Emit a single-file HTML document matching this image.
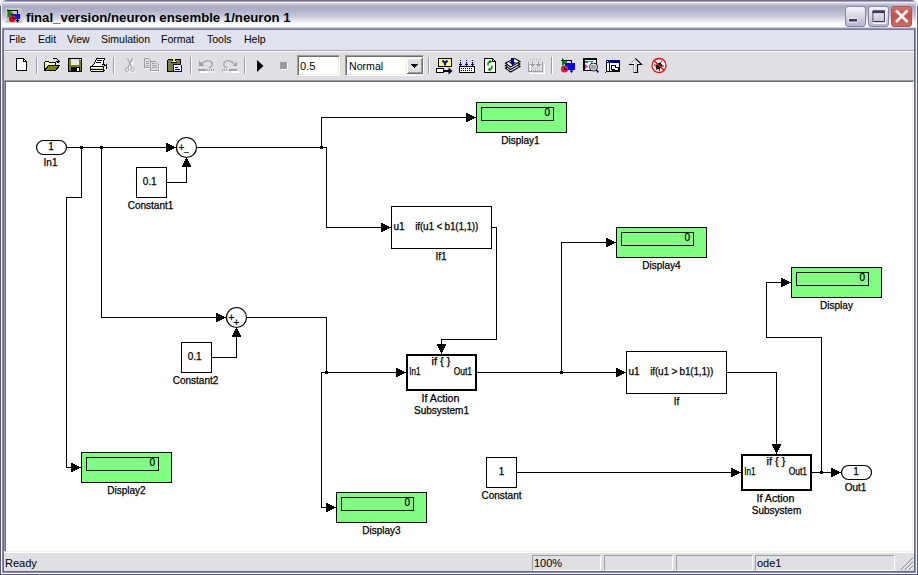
<!DOCTYPE html>
<html><head><meta charset="utf-8"><title>final_version/neuron ensemble 1/neuron 1</title>
<style>
html,body{margin:0;padding:0;}
body{width:918px;height:575px;overflow:hidden;background:#f4f4f6;font-family:"Liberation Sans",sans-serif;position:relative;}
.abs{position:absolute;}
#frame{left:0;top:0;width:918px;height:575px;border-radius:8px 8px 0 0;background:#6d6d8d;overflow:hidden;}
#title{left:0;top:0;width:918px;height:30px;border-radius:8px 8px 0 0;
 background:linear-gradient(to bottom,#70708e 0px,#70708e 1px,#a2a2bd 1px,#a2a2bd 2px,#f2f2f8 2px,#f2f2f8 3px,#cfcfe0 3px,#cfcfe0 4px,#b6b6cf 5px,#a9a9c5 7px,#b3b4ca 11px,#c6c8d8 16px,#e2e3eb 20px,#f7f7fa 23px,#fefefe 25px,#fdfdfe 27px,#d2d2de 27px,#d2d2de 28px,#9797b0 28px,#9797b0 29px,#7c7c9b 29px,#7c7c9b 30px);}
#titletext{left:26px;top:10px;font-weight:bold;font-size:13.2px;line-height:16px;color:#000;white-space:nowrap;letter-spacing:0px;}
#lb0{left:0;top:6px;width:1px;height:569px;background:#58587a;}
#lb1{left:1px;top:4px;width:1px;height:570px;background:#fbfbfe;}
#lb2{left:2px;top:28px;width:1px;height:545px;background:#8c8cab;}
#lb3{left:3px;top:29px;width:1px;height:543px;background:#6b6b89;}
#rb0{left:917px;top:6px;width:1px;height:569px;background:#58587a;}
#rb1{left:916px;top:4px;width:1px;height:570px;background:#fbfbfe;}
#rb2{left:914px;top:29px;width:1px;height:543px;background:#66668a;}
#rb3{left:915px;top:28px;width:1px;height:545px;background:#9090ae;}
#bb0{left:0;top:574px;width:918px;height:1px;background:#58587a;}
#bb1{left:1px;top:573px;width:916px;height:1px;background:#fbfbfe;}
#bb2{left:3px;top:571px;width:912px;height:1px;background:#66668a;}
#bb3{left:2px;top:572px;width:914px;height:1px;background:#9090ae;}
#menubar{left:4px;top:30px;width:910px;height:20px;background:#e0e3ee;}
.mi{position:absolute;top:33px;font-size:10.5px;line-height:13px;color:#000;white-space:nowrap;}
#sep1{left:4px;top:50px;width:910px;height:1px;background:#a7a6aa;}
#sep2{left:4px;top:51px;width:910px;height:1px;background:#ffffff;}
#toolbar{left:4px;top:52px;width:910px;height:28px;background:#e0dfe3;}
.tsep{position:absolute;top:57px;width:1px;height:17px;background:#9d9da1;border-right:1px solid #fff;}
#cvborder{left:4px;top:80px;width:910px;height:472px;background:#e0dfe3;}
#cvtop{left:4px;top:80px;width:910px;height:1px;background:#9d9da1;}
#cvtop2{left:5px;top:81px;width:908px;height:1px;background:#716f64;}
#cvleft{left:4px;top:80px;width:1px;height:471px;background:#9d9da1;}
#cvleft2{left:5px;top:81px;width:1px;height:470px;background:#716f64;}
#cvright{left:912px;top:82px;width:1px;height:470px;background:#f1efe2;}
#cvright2{left:913px;top:81px;width:1px;height:472px;background:#fff;}
#cvbot2{left:4px;top:552px;width:910px;height:1px;background:#fff;}
#cvbot{left:5px;top:551px;width:908px;height:1px;background:#f1efe2;}
#canvas{left:6px;top:82px;width:906px;height:469px;background:#fff;}
#status{left:4px;top:553px;width:910px;height:18px;background:#e0dfe3;}
.pane{position:absolute;top:555px;border-top:1px solid #9d9da1;border-left:1px solid #9d9da1;border-right:1px solid #fff;border-bottom:1px solid #fff;font-size:11px;line-height:14px;color:#000;padding-left:1px;box-sizing:border-box;height:16px;}
.st{position:absolute;font-size:11px;line-height:13px;color:#000;white-space:nowrap;}
.cbtn{position:absolute;top:6px;width:19px;height:19px;border:1px solid #8686a6;border-radius:3px;background:linear-gradient(to bottom,#f4f4fa 0%,#dcdce8 40%,#b4b4cc 100%);}
#cclose{background:linear-gradient(to bottom,#d8706a 0%,#c4504c 45%,#d06a60 100%);border-color:#9a5a64;}
svg{position:absolute;overflow:visible;}
svg text{font-family:"Liberation Sans",sans-serif;fill:#000;stroke:#000;stroke-width:0.25px;}
.inp{position:absolute;top:55px;height:17px;background:#fff;border:1px solid;border-color:#9d9da1 #fff #fff #9d9da1;padding:1px;box-shadow:inset 1px 1px 0 #716f64, inset -1px -1px 0 #f1efe2;font-size:11px;line-height:19px;color:#000;}
</style></head>
<body>
<div id="frame" class="abs"></div>
<div id="title" class="abs"></div>
<div id="lb0" class="abs"></div><div id="lb1" class="abs"></div><div id="lb2" class="abs"></div><div id="lb3" class="abs"></div>
<div id="rb2" class="abs"></div><div id="rb3" class="abs"></div><div id="rb1" class="abs"></div><div id="rb0" class="abs"></div>
<div id="bb2" class="abs"></div><div id="bb3" class="abs"></div><div id="bb1" class="abs"></div><div id="bb0" class="abs"></div>
<!-- title icon -->
<svg class="abs" style="left:6px;top:8px" width="16" height="15" viewBox="0 0 16 15" shape-rendering="crispEdges">
<rect x="0" y="0" width="16" height="15" fill="#c6c6c6"/>
<polygon points="1.500,1 1.500,10 7.500,5.500" fill="#008a10" shape-rendering="auto"/>
<rect x="5" y="6" width="9" height="5" fill="#0000f0"/>
<circle cx="6.300" cy="10.700" r="3.400" fill="#f00000" shape-rendering="auto"/>
<path d="M1 2.500 H11.500 V13" fill="none" stroke="#000"/>
<path d="M6.500 8.500 V10.500 H9" fill="none" stroke="#000"/>
<polygon points="9.500,12 13.500,12 11.500,14.500" fill="#000" shape-rendering="auto"/>
<rect x="15" y="0" width="1" height="1" fill="#00ffff"/><rect x="0" y="14" width="1" height="1" fill="#00ffff"/>
</svg>
<div id="titletext" class="abs">final_version/neuron ensemble 1/neuron 1</div>
<!-- caption buttons -->
<div class="cbtn" style="left:845px"></div>
<div class="cbtn" style="left:868px"></div>
<div class="cbtn" id="cclose" style="left:891px"></div>
<svg class="abs" style="left:845px;top:6px" width="67" height="21" viewBox="845 6 67 21">
<rect x="848.5" y="18.5" width="9" height="4" fill="#fff"/>
<rect x="849" y="19" width="8" height="2.6" fill="#3a3a5a"/>
<rect x="873" y="11" width="12" height="11.5" fill="none" stroke="#fff" stroke-width="1.2" transform="translate(0.6,0.8)"/>
<path d="M873 11 H884.5 V21.5 H873 Z" fill="none" stroke="#3a3a5a" stroke-width="1"/>
<rect x="872.5" y="10.5" width="12.5" height="2.6" fill="#3a3a5a"/>
<path d="M896 10.5 L907.5 22 M907.5 10.5 L896 22" stroke="#fff" stroke-width="2.6" stroke-linecap="butt" fill="none"/>
</svg>
<!-- menubar -->
<div id="menubar" class="abs"></div>
<div class="mi" style="left:9px">File</div>
<div class="mi" style="left:38px">Edit</div>
<div class="mi" style="left:67px">View</div>
<div class="mi" style="left:101px">Simulation</div>
<div class="mi" style="left:161px">Format</div>
<div class="mi" style="left:207px">Tools</div>
<div class="mi" style="left:244px">Help</div>
<div id="sep1" class="abs"></div><div id="sep2" class="abs"></div>
<div id="toolbar" class="abs"></div>
<div class="tsep" style="left:36px"></div>
<div class="tsep" style="left:113px"></div>
<div class="tsep" style="left:190px"></div>
<div class="tsep" style="left:244px"></div>
<div class="tsep" style="left:428px"></div>
<div class="tsep" style="left:551px"></div>
<svg class="abs" style="left:0;top:52px" width="700" height="28" viewBox="0 52 700 28" shape-rendering="crispEdges">
<!-- new -->
<path d="M16.5 58.5 H23.5 L26.5 61.5 V70.5 H16.5 Z" fill="#fff" stroke="#000"/>
<path d="M23.5 58.5 V61.5 H26.5" fill="none" stroke="#000"/>
<!-- open -->
<path d="M44.5 70.5 V62.5 L45.5 61.5 H48.5 L49.5 62.5 H55.5 V66" fill="#ffffa0" stroke="#000"/>
<path d="M44.5 70.5 L48.5 65.500 H59.500 L55.500 70.500 Z" fill="#808000" stroke="#000"/>
<path d="M52.500 59.500 L53.500 58.500 H56.500 L58.500 60.500 V62" fill="none" stroke="#000"/>
<path d="M56 61.500 H60 M57 62.500 H59" stroke="#000" fill="none"/>
<!-- save -->
<rect x="68.5" y="58.5" width="13" height="13" fill="#808000" stroke="#000"/>
<rect x="71" y="59" width="8" height="6" fill="#e8e8e8"/>
<rect x="71" y="67" width="9" height="4" fill="#000"/>
<rect x="77" y="68" width="2" height="3" fill="#fff"/>
<rect x="80" y="59" width="1" height="1" fill="#fff"/>
<!-- print -->
<path d="M93.500 65.500 L96.500 58.500 H104.500 L102.500 65.500" fill="#fff" stroke="#000"/>
<path d="M97 60.500 H102 M96 62.500 H101" stroke="#000" fill="none"/>
<path d="M90.500 67.500 L93.500 64.500 M102 64.500 H104.500 L106.500 66.500" stroke="#000" fill="none"/>
<path d="M90.500 66.500 H103.500 V71.500 H91.500 L90.500 70.500 Z" fill="#fff" stroke="#000"/>
<path d="M103.500 66.500 L106.500 64.500 V68.500 L103.500 71.500" fill="#e8e8e8" stroke="#000"/>
<path d="M91 69.500 H103" stroke="#000"/>
<path d="M91 68.500 H103" stroke="#c8c8c8"/>
<rect x="97" y="68" width="4" height="1" fill="#ffff00"/>
<path d="M104 67.500 H105 M105 69.500 H106" stroke="#fff"/>
<!-- cut (disabled) -->
<g shape-rendering="auto" fill="none">
<path d="M128 59.500 L133 68 M133 59.500 L128 68" stroke="#fff" stroke-width="1.200" transform="translate(1,1)"/>
<circle cx="127.500" cy="69.500" r="1.800" stroke="#fff" transform="translate(1,1)"/><circle cx="132.500" cy="69.500" r="1.800" stroke="#fff" transform="translate(1,1)"/>
<path d="M127.500 58.500 L132 67.500 M132.500 58.500 L128 67.500" stroke="#a0a0a4" stroke-width="1.200"/>
<circle cx="127" cy="69.500" r="1.800" stroke="#a0a0a4"/><circle cx="132.500" cy="69.500" r="1.800" stroke="#a0a0a4"/>
</g>
<!-- copy (disabled) -->
<path d="M145.500 59.500 H149.500 L151.500 61.500 V68.500 H145.500 Z" fill="none" stroke="#fff"/>
<path d="M151.500 62.500 H156.500 L159.500 65.500 V71.500 H151.500 Z" fill="none" stroke="#fff"/>
<path d="M144.500 58.500 H148.500 L150.500 60.500 V67.500 H144.500 Z" fill="#e0dfe3" stroke="#a0a0a4"/>
<path d="M150.500 61.500 H155.500 L158.500 64.500 V70.500 H150.500 Z" fill="#e0dfe3" stroke="#a0a0a4"/>
<path d="M146 61.500 H149 M146 63.500 H149 M146 65.500 H149 M152 65.500 H157 M152 67.500 H157 M152 63.500 H155" stroke="#a0a0a4" fill="none"/>
<!-- paste -->
<rect x="167.500" y="59.500" width="13" height="12" rx="1.500" fill="#7c7c44" stroke="#000"/>
<path d="M171 62.500 H177" stroke="#000"/>
<path d="M172 61.500 H176 M173 60.500 H175" stroke="#e8e8a0"/>
<rect x="173" y="58" width="2" height="2" fill="#ffff00"/>
<path d="M172 60.500 H173 M175 60.500 H176" stroke="#000"/>
<rect x="173.500" y="64.500" width="8" height="7" fill="#fff" stroke="#000080"/>
<path d="M175 67.500 H178 M175 69.500 H180" stroke="#000080"/>
<rect x="181" y="64" width="1" height="1" fill="#fff"/>
<!-- undo (disabled) -->
<g fill="none">
<path d="M199 70.500 H207 M208 70.500 H209 M210 70.500 H211 M212 70.500 H213" stroke="#fff" stroke-width="2" transform="translate(1,1)"/>
<path d="M198 69.500 H206" stroke="#a0a0a4" stroke-width="2"/>
<path d="M207 69.500 H208 M209 69.500 H210 M211 69.500 H212 M213 69.500 H214" stroke="#a0a0a4" stroke-width="2"/>
<path d="M202 63.500 Q207 58.500 211.500 62 Q214 65.500 209 68" stroke="#a0a0a4" stroke-width="1.300" shape-rendering="auto"/>
<polygon points="199,61 199,66 204,66" fill="#a0a0a4"/>
</g>
<!-- redo (disabled) -->
<g fill="none">
<path d="M230 70.500 H238 M223 70.500 H224 M225 70.500 H226 M227 70.500 H228" stroke="#fff" stroke-width="2" transform="translate(1,1)"/>
<path d="M229 69.500 H237" stroke="#a0a0a4" stroke-width="2"/>
<path d="M222 69.500 H223 M224 69.500 H225 M226 69.500 H227" stroke="#a0a0a4" stroke-width="2"/>
<path d="M234 63.500 Q229 58.500 224.500 62 Q222 65.500 227 68" stroke="#a0a0a4" stroke-width="1.300" shape-rendering="auto"/>
<polygon points="237,61 237,66 232,66" fill="#a0a0a4"/>
</g>
<!-- play / stop -->
<polygon points="257,60 257,72 263.500,66" fill="#000" shape-rendering="auto"/>
<rect x="281" y="63" width="7" height="7" fill="#fff"/>
<rect x="280" y="62" width="7" height="7" fill="#9a9a9e"/>
<!-- Y block -->
<rect x="438.500" y="58.500" width="13" height="8" fill="#ffff70" stroke="#000"/>
<path d="M442.500 60.500 L445 63 L447.500 60.500 M445 63 V65.500" stroke="#0000c0" stroke-width="2" fill="none" shape-rendering="auto"/>
<rect x="436.500" y="68.500" width="7" height="4" fill="#fff" stroke="#000"/>
<path d="M444 70.500 H450" stroke="#000"/><path d="M444 71.500 H450" stroke="#000"/>
<polygon points="448.500,67.500 452.500,71 448.500,74.500" fill="#000" shape-rendering="auto"/>
<!-- keyboard -->
<rect x="459.500" y="66.500" width="15" height="6" fill="#fff" stroke="#000"/>
<path d="M461 68.500 H462 M463 68.500 H464 M465 68.500 H466 M467 68.500 H468 M469 68.500 H470 M471 68.500 H472 M461 70.500 H462 M463 70.500 H464 M465 70.500 H466 M467 70.500 H468 M469 70.500 H470 M471 70.500 H472" stroke="#000"/>
<g fill="#000090" stroke="none">
<rect x="460" y="60" width="1" height="1"/><rect x="460" y="62" width="1" height="3"/><polygon points="458.500,63.500 462.500,63.500 460.500,66.500"/>
<rect x="466" y="60" width="1" height="1"/><rect x="466" y="62" width="1" height="3"/><polygon points="464.500,63.500 468.500,63.500 466.500,66.500"/>
<rect x="472" y="60" width="1" height="1"/><rect x="472" y="62" width="1" height="3"/><polygon points="470.500,63.500 474.500,63.500 472.500,66.500"/>
</g>
<!-- doc refresh -->
<path d="M484.500 58.500 H492.500 L495.500 61.500 V72.500 H484.500 Z" fill="#fff" stroke="#000"/>
<path d="M492.500 58.500 V61.500 H495.500" fill="none" stroke="#000"/>
<g shape-rendering="auto" fill="none" stroke="#009000" stroke-width="1.400">
<path d="M488 65.500 Q487.500 62 490 61.500"/><polygon points="489.500,59.500 492.500,61.500 489.500,63.500" fill="#009000" stroke="none"/>
<path d="M492 65.500 Q492.500 69 490 69.500"/><polygon points="490.500,67.500 487.500,69.500 490.500,71.500" fill="#009000" stroke="none"/>
</g>
<!-- stack -->
<g shape-rendering="auto" stroke="#000" stroke-width="1.100" fill="#fff">
<polygon points="505.500,68 515,63.500 520,66.500 510.500,72"/>
<polygon points="505.500,65.500 515,61 520,64 510.500,69.500"/>
<polygon points="505.500,63 515,58.500 520,61.500 510.500,67"/>
</g>
<rect x="511" y="58" width="3" height="4" fill="#000090"/>
<polygon points="509,62 516,62 512.500,65.500" fill="#000090" shape-rendering="auto"/>
<!-- disabled box -->
<path d="M529.500 63 V72.500 H543.500 V63" fill="none" stroke="#fff" transform="translate(1,1)"/>
<path d="M528.500 62 V71.500 H542.500 V62" fill="none" stroke="#a0a0a4"/>
<g fill="#a0a0a4"><rect x="532" y="61" width="1" height="3"/><polygon points="530,64 535,64 532.500,67"/><rect x="538" y="61" width="1" height="3"/><polygon points="536,64 541,64 538.500,67"/></g>
<path d="M530 59.500 H531 M532 59.500 H533 M534 59.500 H535 M536 59.500 H537 M538 59.500 H539 M540 59.500 H541 M531 68.500 H532 M533 68.500 H534 M535 68.500 H536 M537 68.500 H538 M539 68.500 H540 M531 70.500 H532 M533 70.500 H534 M535 70.500 H536 M537 70.500 H538 M539 70.500 H540" stroke="#b4b4b8"/>
<!-- library browser -->
<polygon points="562,58 562,66 567.500,62" fill="#008000" shape-rendering="auto"/>
<rect x="565" y="63" width="10" height="7" fill="#0000ff"/>
<circle cx="564.500" cy="69" r="3.600" fill="#f01050" shape-rendering="auto"/>
<path d="M561 60.500 H571.500 V71" fill="none" stroke="#000"/>
<polygon points="569.500,70.500 573.500,70.500 571.500,73" fill="#000" shape-rendering="auto"/>
<path d="M564.500 67 V69.500 H566.500" fill="none" stroke="#000"/>
<!-- model explorer -->
<rect x="583.500" y="58.500" width="13" height="12" fill="#fff" stroke="#000"/>
<path d="M583 59.500 H597 M584.500 59 V71" stroke="#000"/>
<rect x="585" y="61" width="3" height="2" fill="#008080"/>
<path d="M588 61.500 H593 M591.500 62 V65" stroke="#00a0a0"/>
<polygon points="585,64 585,69 588,66.500" fill="#ff00ff" shape-rendering="auto"/>
<circle cx="593.500" cy="67" r="4" fill="#fff" stroke="#000" stroke-width="0.900" shape-rendering="auto"/><circle cx="593.500" cy="67" r="2.600" fill="#a0a0a4" shape-rendering="auto"/>
<path d="M596.300 70 L598.300 72.300" stroke="#000090" stroke-width="1.800" shape-rendering="auto"/>
<!-- window -->
<rect x="606.500" y="60.500" width="13" height="11" fill="#fff" stroke="#000"/>
<rect x="606" y="60" width="14" height="3" fill="#000080"/>
<rect x="607" y="61" width="1" height="1" fill="#fff"/>
<path d="M609.500 63 V71 M612 65.500 H615 M612 69.500 H615 M611.500 65 V70 M615.500 65 V67.500 H618 V70.500 H612" stroke="#000" fill="none"/>
<rect x="605" y="72" width="1" height="1" fill="#000080"/>
<!-- up arrow -->
<path d="M635.500 58.500 L629.500 64.500 H633.500 V72.500 H637.500 V64.500 H641.500 Z" fill="#f6f6f6" stroke="none" shape-rendering="auto"/>
<path d="M636.500 60 V72 M635.500 61 V72" fill="none" stroke="#d4d4d8" shape-rendering="crispEdges"/>
<path d="M635.500 58.500 L629.500 64.500 M633.500 65 V72" fill="none" stroke="#9a9a9e" stroke-width="0.900" shape-rendering="auto"/>
<path d="M635.500 58.500 L641.500 64.500 H637.500 V72.500 H633.500 M629 64.500 H634" fill="none" stroke="#000" stroke-width="1.100" shape-rendering="auto"/>
<!-- no bug -->
<g shape-rendering="auto">
<circle cx="659" cy="65.500" r="7" fill="#fff" stroke="#ff0000" stroke-width="1.300"/>
<ellipse cx="659" cy="66" rx="3.600" ry="2.600" fill="#000" transform="rotate(-40 659 66)"/>
<path d="M654 65 L664 66 M656 70 L662 61 M659 66 L659.500 71" stroke="#000" stroke-width="0.900"/>
<circle cx="662.500" cy="63" r="1.500" fill="#e8e8e8"/>
<path d="M654 60.500 L664 70.500" stroke="#ff0000" stroke-width="1.400"/>
</g>
</svg>

<div class="inp" style="left:297px;width:39px;"><span style="padding-left:1px">0.5</span></div>
<div class="inp" style="left:345px;width:75px;"><span style="padding-left:2px;font-size:10.6px">Normal</span>
<div style="position:absolute;right:0px;top:1px;width:17px;height:17px;background:#e0dfe3;box-shadow:inset 1px 1px 0 #f1efe2, inset -1px -1px 0 #716f64, inset 2px 2px 0 #fff, inset -2px -2px 0 #9d9da1;"></div>
<svg style="left:65px;top:8px" width="7" height="4" viewBox="0 0 7 4" shape-rendering="crispEdges"><polygon points="0,0 7,0 3.5,4" fill="#000"/></svg>
</div>
<!-- canvas -->
<div id="cvborder" class="abs"></div><div id="cvtop" class="abs"></div><div id="cvleft" class="abs"></div><div id="cvtop2" class="abs"></div><div id="cvleft2" class="abs"></div>
<div id="cvright" class="abs"></div><div id="cvright2" class="abs"></div><div id="cvbot" class="abs"></div>
<div id="canvas" class="abs"></div>
<svg class="abs" style="left:0;top:0" width="918" height="575" viewBox="0 0 918 575" shape-rendering="crispEdges">
<rect x="36.5" y="140.5" width="30" height="14" rx="7" ry="7" fill="#fff" stroke="#000" stroke-width="1.2" shape-rendering="auto"/>
<text x="51" y="150.0" text-anchor="middle" font-size="10" >1</text>
<text x="50.5" y="166.0" text-anchor="middle" font-size="10" >In1</text>
<path d="M67.5 147.5 L175.5 147.5" fill="none" stroke="#000" stroke-width="1" stroke-linecap="square"/>
<polygon points="176,147.5 166,142.5 166,152.5" fill="#000"/>
<rect x="80" y="146" width="3" height="3" fill="#000"/>
<rect x="100" y="146" width="3" height="3" fill="#000"/>
<path d="M81.5 147.5 L81.5 197.5 L66.5 197.5 L66.5 467.5 L80.5 467.5" fill="none" stroke="#000" stroke-width="1" stroke-linecap="square"/>
<polygon points="81,467.5 71,462.5 71,472.5" fill="#000"/>
<path d="M101.5 147.5 L101.5 317.5 L225.5 317.5" fill="none" stroke="#000" stroke-width="1" stroke-linecap="square"/>
<polygon points="226,317.5 216,312.5 216,322.5" fill="#000"/>
<circle cx="186.5" cy="147.5" r="10" fill="#fff" stroke="#000" stroke-width="1.2" shape-rendering="auto"/>
<text x="181.5" y="151.0" text-anchor="middle" font-size="10" >+</text>
<text x="186.5" y="150.7" text-anchor="middle" font-size="8" >_</text>
<rect x="136.5" y="167.5" width="30" height="30" fill="#fff" stroke="#000" stroke-width="1"/>
<text x="149.6" y="185.0" text-anchor="middle" font-size="10" >0.1</text>
<text x="150.5" y="209.0" text-anchor="middle" font-size="10" >Constant1</text>
<path d="M167.5 182.5 L186.5 182.5 L186.5 158.5" fill="none" stroke="#000" stroke-width="1" stroke-linecap="square"/>
<polygon points="186.5,157 181.5,167 191.5,167" fill="#000"/>
<path d="M196.5 147.5 L326.5 147.5 L326.5 227.5 L390.5 227.5" fill="none" stroke="#000" stroke-width="1" stroke-linecap="square"/>
<polygon points="391,227.5 381,222.5 381,232.5" fill="#000"/>
<rect x="320" y="146" width="3" height="3" fill="#000"/>
<path d="M321.5 147.5 L321.5 117.5 L475.5 117.5" fill="none" stroke="#000" stroke-width="1" stroke-linecap="square"/>
<polygon points="476,117.5 466,112.5 466,122.5" fill="#000"/>
<rect x="476.5" y="102.5" width="90" height="30" fill="#80ff80" stroke="#000" stroke-width="1"/>
<rect x="481.5" y="107.5" width="72" height="13" fill="#80ff80" stroke="#000" stroke-width="1"/>
<text x="550" y="116.0" text-anchor="end" font-size="10" >0</text>
<text x="520.5" y="144.0" text-anchor="middle" font-size="10" >Display1</text>
<rect x="391.5" y="206.5" width="100" height="42" fill="#fff" stroke="#000" stroke-width="1"/>
<text x="393.5" y="230.0" text-anchor="start" font-size="10" >u1</text>
<text x="415.3" y="230.0" text-anchor="start" font-size="10" textLength="63">if(u1 &lt; b1(1,1))</text>
<text x="441" y="260.0" text-anchor="middle" font-size="10" >If1</text>
<path d="M492.5 227.5 L496.5 227.5 L496.5 339.5 L441.5 339.5 L441.5 353.5" fill="none" stroke="#000" stroke-width="1" stroke-linecap="square"/>
<polygon points="441.5,354 436.5,344 446.5,344" fill="#000"/>
<rect x="407.0" y="355.0" width="69" height="35" fill="#fff" stroke="#000" stroke-width="2"/>
<text x="441" y="365.0" text-anchor="middle" font-size="10" textLength="19" lengthAdjust="spacingAndGlyphs">if { }</text>
<text x="409.3" y="375.0" text-anchor="start" font-size="10" textLength="11.3" lengthAdjust="spacingAndGlyphs">In1</text>
<text x="472" y="375.0" text-anchor="end" font-size="10" textLength="18.3" lengthAdjust="spacingAndGlyphs">Out1</text>
<text x="440.5" y="402.0" text-anchor="middle" font-size="10" textLength="38" lengthAdjust="spacingAndGlyphs">If Action</text>
<text x="441.5" y="414.0" text-anchor="middle" font-size="10" >Subsystem1</text>
<circle cx="236.5" cy="317.5" r="10" fill="#fff" stroke="#000" stroke-width="1.2" shape-rendering="auto"/>
<text x="231.5" y="321.0" text-anchor="middle" font-size="10" >+</text>
<text x="236.5" y="326.0" text-anchor="middle" font-size="10" >+</text>
<rect x="181.5" y="342.5" width="30" height="30" fill="#fff" stroke="#000" stroke-width="1"/>
<text x="194.6" y="360.0" text-anchor="middle" font-size="10" >0.1</text>
<text x="195.5" y="384.0" text-anchor="middle" font-size="10" >Constant2</text>
<path d="M212.5 357.5 L236.5 357.5 L236.5 328.5" fill="none" stroke="#000" stroke-width="1" stroke-linecap="square"/>
<polygon points="236.5,327 231.5,337 241.5,337" fill="#000"/>
<path d="M246.5 317.5 L326.5 317.5 L326.5 372.5" fill="none" stroke="#000" stroke-width="1" stroke-linecap="square"/>
<path d="M321.5 372.5 L405.5 372.5" fill="none" stroke="#000" stroke-width="1" stroke-linecap="square"/>
<polygon points="406,372.5 396,367.5 396,377.5" fill="#000"/>
<rect x="325" y="371" width="3" height="3" fill="#000"/>
<path d="M321.5 372.5 L321.5 507.5 L335.5 507.5" fill="none" stroke="#000" stroke-width="1" stroke-linecap="square"/>
<polygon points="336,507.5 326,502.5 326,512.5" fill="#000"/>
<rect x="336.5" y="492.5" width="90" height="30" fill="#80ff80" stroke="#000" stroke-width="1"/>
<rect x="341.5" y="497.5" width="72" height="13" fill="#80ff80" stroke="#000" stroke-width="1"/>
<text x="410" y="506.0" text-anchor="end" font-size="10" >0</text>
<text x="381.5" y="534.0" text-anchor="middle" font-size="10" >Display3</text>
<path d="M477.5 372.5 L625.5 372.5" fill="none" stroke="#000" stroke-width="1" stroke-linecap="square"/>
<polygon points="626,372.5 616,367.5 616,377.5" fill="#000"/>
<rect x="560" y="371" width="3" height="3" fill="#000"/>
<path d="M561.5 372.5 L561.5 242.5 L615.5 242.5" fill="none" stroke="#000" stroke-width="1" stroke-linecap="square"/>
<polygon points="616,242.5 606,237.5 606,247.5" fill="#000"/>
<rect x="616.5" y="227.5" width="90" height="30" fill="#80ff80" stroke="#000" stroke-width="1"/>
<rect x="621.5" y="232.5" width="72" height="13" fill="#80ff80" stroke="#000" stroke-width="1"/>
<text x="690" y="241.0" text-anchor="end" font-size="10" >0</text>
<text x="661.5" y="269.0" text-anchor="middle" font-size="10" >Display4</text>
<rect x="626.5" y="351.5" width="100" height="42" fill="#fff" stroke="#000" stroke-width="1"/>
<text x="628.5" y="375.0" text-anchor="start" font-size="10" >u1</text>
<text x="650.3" y="375.0" text-anchor="start" font-size="10" textLength="63">if(u1 &gt; b1(1,1))</text>
<text x="676.5" y="405.0" text-anchor="middle" font-size="10" >If</text>
<path d="M727.5 372.5 L776.5 372.5 L776.5 453.5" fill="none" stroke="#000" stroke-width="1" stroke-linecap="square"/>
<polygon points="776.5,454 771.5,444 781.5,444" fill="#000"/>
<rect x="742.0" y="455.0" width="69" height="35" fill="#fff" stroke="#000" stroke-width="2"/>
<text x="776" y="465.0" text-anchor="middle" font-size="10" textLength="19" lengthAdjust="spacingAndGlyphs">if { }</text>
<text x="744.3" y="475.0" text-anchor="start" font-size="10" textLength="11.3" lengthAdjust="spacingAndGlyphs">In1</text>
<text x="807" y="475.0" text-anchor="end" font-size="10" textLength="18.3" lengthAdjust="spacingAndGlyphs">Out1</text>
<text x="775.5" y="502.0" text-anchor="middle" font-size="10" textLength="38" lengthAdjust="spacingAndGlyphs">If Action</text>
<text x="776.5" y="514.0" text-anchor="middle" font-size="10" >Subsystem</text>
<rect x="486.5" y="457.5" width="30" height="30" fill="#fff" stroke="#000" stroke-width="1"/>
<text x="501.5" y="475.0" text-anchor="middle" font-size="10" >1</text>
<text x="501.5" y="499.0" text-anchor="middle" font-size="10" >Constant</text>
<path d="M517.5 472.5 L740.5 472.5" fill="none" stroke="#000" stroke-width="1" stroke-linecap="square"/>
<polygon points="741,472.5 731,467.5 731,477.5" fill="#000"/>
<path d="M812.5 472.5 L840.5 472.5" fill="none" stroke="#000" stroke-width="1" stroke-linecap="square"/>
<polygon points="841,472.5 831,467.5 831,477.5" fill="#000"/>
<rect x="820" y="471" width="3" height="3" fill="#000"/>
<path d="M821.5 472.5 L821.5 337.5 L766.5 337.5 L766.5 282.5 L790.5 282.5" fill="none" stroke="#000" stroke-width="1" stroke-linecap="square"/>
<polygon points="791,282.5 781,277.5 781,287.5" fill="#000"/>
<rect x="791.5" y="267.5" width="90" height="30" fill="#80ff80" stroke="#000" stroke-width="1"/>
<rect x="796.5" y="272.5" width="72" height="13" fill="#80ff80" stroke="#000" stroke-width="1"/>
<text x="865" y="281.0" text-anchor="end" font-size="10" >0</text>
<text x="836.5" y="309.0" text-anchor="middle" font-size="10" >Display</text>
<rect x="841.5" y="465.5" width="30" height="14" rx="7" ry="7" fill="#fff" stroke="#000" stroke-width="1.2" shape-rendering="auto"/>
<text x="856" y="475.0" text-anchor="middle" font-size="10" >1</text>
<text x="855.5" y="491.0" text-anchor="middle" font-size="10" >Out1</text>
<rect x="81.5" y="452.5" width="90" height="30" fill="#80ff80" stroke="#000" stroke-width="1"/>
<rect x="86.5" y="457.5" width="72" height="13" fill="#80ff80" stroke="#000" stroke-width="1"/>
<text x="155" y="466.0" text-anchor="end" font-size="10" >0</text>
<text x="126.5" y="494.0" text-anchor="middle" font-size="10" >Display2</text>
</svg>
<!-- status -->
<div id="status" class="abs"></div><div id="cvbot2" class="abs"></div>
<div class="st" style="left:5px;top:557px">Ready</div>
<div class="pane" style="left:532px;width:69px">100%</div>
<div class="pane" style="left:604px;width:69px"></div>
<div class="pane" style="left:676px;width:77px"></div>
<div class="pane" style="left:755px;width:140px">ode1</div>
<svg class="abs" style="left:900px;top:557px" width="13" height="13" viewBox="0 0 13 13">
<path d="M1 13 L13 1 M5 13 L13 5 M9 13 L13 9" stroke="#9d9da1" stroke-width="1.4" fill="none"/>
<path d="M2 13 L13 2 M6 13 L13 6 M10 13 L13 10" stroke="#fff" stroke-width="0.8" fill="none"/>
</svg>
</body></html>
